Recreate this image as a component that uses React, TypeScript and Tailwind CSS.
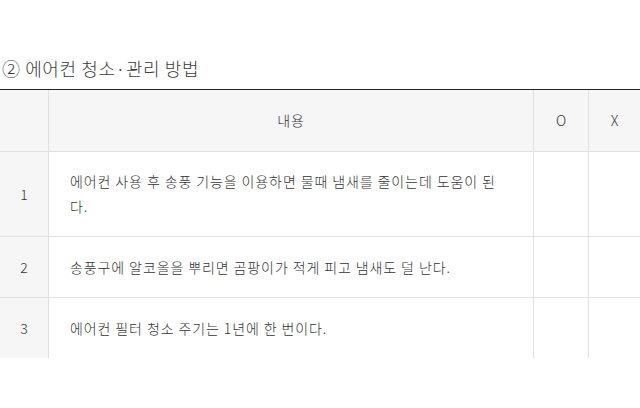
import React from "react";

const font = { fontFamily: '"Noto Sans CJK KR", "Noto Sans", sans-serif' };

export default function App() {
  const rows = [
    { n: "1", h: "h-[85px] border-b", t: <>에어컨 사용 후 송풍 기능을 이용하면 물때 냄새를 줄이는데 도움이 된<br />다.</> },
    { n: "2", h: "h-[61px] border-b", t: <>송풍구에 알코올을 뿌리면 곰팡이가 적게 피고 냄새도 덜 난다.</> },
    { n: "3", h: "h-[60px]", t: <>에어컨 필터 청소 주기는 1년에 한 번이다.</> },
  ];
  return (
    <div className="w-[640px] h-[408px] bg-white pt-[56px] font-light" style={font}>
      <div className="h-[24px] leading-[24px] text-[18px] text-[#3a3a3a] pl-[2px] mb-[9px] tracking-[0.6px]">② 에어컨 청소·관리 방법</div>
      <div className="border-t border-[#222]">
        <div className="flex h-[62px] border-b border-[#e0e0e0] bg-[#f6f6f6] text-[14px] text-[#333]">
          <div className="w-[49px] border-r border-[#e0e0e0]" />
          <div className="w-[485px] border-r border-[#e0e0e0] flex items-center justify-center tracking-[0.85px]">내용</div>
          <div className="w-[55px] border-r border-[#e0e0e0] flex items-center justify-center">O</div>
          <div className="flex-1 flex items-center justify-center">X</div>
        </div>
        {rows.map((r) => (
          <div key={r.n} className={`flex ${r.h} border-[#e0e0e0] text-[14px] text-[#333]`}>
            <div className="w-[49px] border-r border-[#e0e0e0] bg-[#f6f6f6] flex items-center justify-center">{r.n}</div>
            <div className="w-[485px] border-r border-[#e0e0e0] flex items-center pl-[21px] pr-[4px] leading-[25px] tracking-[0.9px]">
              <div className="whitespace-nowrap">{r.t}</div>
            </div>
            <div className="w-[55px] border-r border-[#e0e0e0]" />
            <div className="flex-1" />
          </div>
        ))}
      </div>
    </div>
  );
}
